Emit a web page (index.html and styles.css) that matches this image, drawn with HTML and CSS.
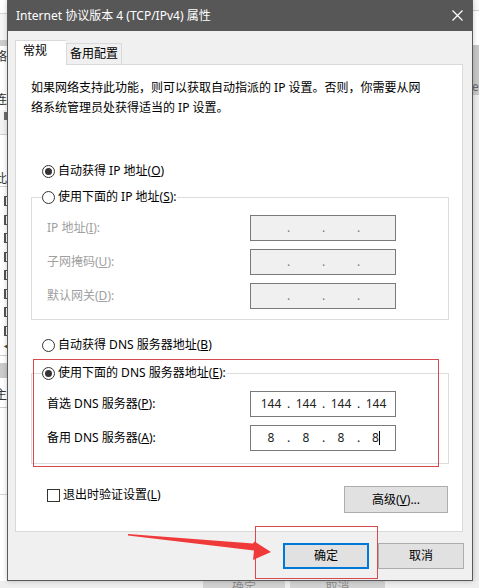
FILE: index.html
```html
<!DOCTYPE html>
<html lang="zh-CN">
<head>
<meta charset="utf-8">
<title>Internet 协议版本 4 (TCP/IPv4) 属性</title>
<link rel="stylesheet" href="styles.css">
</head>
<body>
<!-- window behind the dialog -->
<div class="backdrop">
  <div class="back-left">
    <div class="bl bl-top"></div>
    <div class="bl bl-soft"></div>
    <div class="bl bl-band"></div>
    <div class="bl bl-char c1">络</div>
    <div class="bl bl-char c2">连</div>
    <div class="bl bl-mark"><i></i></div>
    <div class="bl bl-char c3">此</div>
    <ul class="bl-list">
      <li><i></i></li><li><i></i></li><li><i></i></li><li><i></i></li>
      <li><i></i></li><li><i></i></li><li><i></i></li><li><i></i></li>
    </ul>
    <div class="bl bl-scroll">◄</div>
    <div class="bl bl-gray"></div>
    <div class="bl bl-char c4">主</div>
    <div class="bl bl-blank"></div>
  </div>
  <div class="back-right">
    <div class="br br-top"></div>
    <div class="br br-white"></div>
    <div class="br br-gray">er</div>
  </div>
  <div class="back-footer">
    <span class="back-btn b1">确定</span>
    <span class="back-btn b2">取消</span>
  </div>
</div>

<div class="dialog">
  <div class="titlebar">
    <span class="title">Internet 协议版本 4 (TCP/IPv4) 属性</span>
    <span class="close">
      <svg width="11" height="11" viewBox="0 0 11 11"><path d="M0.5 0.5 L10.5 10.5 M10.5 0.5 L0.5 10.5" stroke="#fff" stroke-width="1.2" fill="none"/></svg>
    </span>
  </div>
  <div class="dialog-body">
    <div class="tabs">
      <div class="tab active">常规</div>
      <div class="tab">备用配置</div>
    </div>
    <div class="panel">
      <p class="intro">如果网络支持此功能，则可以获取自动指派的 IP 设置。否则，你需要从网<br>络系统管理员处获得适当的 IP 设置。</p>

      <div class="choice auto-ip"><span class="radio on"></span>自动获得 IP 地址(<u>O</u>)</div>
      <fieldset class="group group-ip">
        <legend><span class="choice"><span class="radio"></span>使用下面的 IP 地址(<u>S</u>):</span></legend>
        <div class="field disabled">
          <span>IP 地址(<u>I</u>):</span>
          <div class="ip off"><span class="oct"></span><span class="dot">.</span><span class="oct"></span><span class="dot">.</span><span class="oct"></span><span class="dot">.</span><span class="oct"></span></div>
        </div>
        <div class="field disabled">
          <span>子网掩码(<u>U</u>):</span>
          <div class="ip off"><span class="oct"></span><span class="dot">.</span><span class="oct"></span><span class="dot">.</span><span class="oct"></span><span class="dot">.</span><span class="oct"></span></div>
        </div>
        <div class="field disabled">
          <span>默认网关(<u>D</u>):</span>
          <div class="ip off"><span class="oct"></span><span class="dot">.</span><span class="oct"></span><span class="dot">.</span><span class="oct"></span><span class="dot">.</span><span class="oct"></span></div>
        </div>
      </fieldset>

      <div class="choice auto-dns"><span class="radio"></span>自动获得 DNS 服务器地址(<u>B</u>)</div>
      <fieldset class="group group-dns">
        <legend><span class="choice"><span class="radio on"></span>使用下面的 DNS 服务器地址(<u>E</u>):</span></legend>
        <div class="field">
          <span>首选 DNS 服务器(<u>P</u>):</span>
          <div class="ip"><span class="oct">144</span><span class="dot">.</span><span class="oct">144</span><span class="dot">.</span><span class="oct">144</span><span class="dot">.</span><span class="oct">144</span></div>
        </div>
        <div class="field">
          <span>备用 DNS 服务器(<u>A</u>):</span>
          <div class="ip"><span class="oct">8</span><span class="dot">.</span><span class="oct">8</span><span class="dot">.</span><span class="oct">8</span><span class="dot">.</span><span class="oct">8<span class="caret"></span></span></div>
        </div>
      </fieldset>

      <div class="options">
        <label class="check"><span class="box"></span>退出时验证设置(<u>L</u>)</label>
        <button class="btn advanced" type="button">高级(<u>V</u>)...</button>
      </div>
    </div>
    <div class="actions">
      <button class="btn default" type="button">确定</button>
      <button class="btn" type="button">取消</button>
    </div>
  </div>
</div>

<!-- red annotations -->
<div class="mark mark-dns"></div>
<div class="mark mark-ok"></div>
<svg class="arrow" width="479" height="588" viewBox="0 0 479 588">
  <polygon points="128,534 253,543.4 254.5,541.5 271,552 253,560 254,550.5 128,535.6" fill="#f03a3a"/>
</svg>
</body>
</html>
```

FILE: styles.css
```css
* { box-sizing: border-box; }

body {
  margin: 0;
  width: 479px;
  height: 588px;
  position: relative;
  overflow: hidden;
  font: 12px/20px "Noto Sans", "Noto Sans CJK SC", sans-serif;
  color: #000;
  background: #f0f0f0;
}

/* ---------- background window ---------- */
.backdrop {
  position: absolute;
  inset: 0;
  display: grid;
  grid-template-columns: 40px 1fr 30px;
  grid-template-rows: 581px 7px;
  background: #f0f0f0;
}
.back-left {
  grid-column: 1;
  grid-row: 1;
  display: flex;
  flex-direction: column;
  background: #fff;
  overflow: hidden;
  color: #333;
}
.bl { flex: none; }
.bl-top { height: 14px; border-bottom: 1px solid #d4d4d4; }
.bl-soft { height: 26px; background: #f6f6f6; }
.bl-band { height: 6px; background: #cdcdcd; }
.bl-char { margin-left: -5px; line-height: 20px; }
.c1 { height: 40px; padding-top: 1px; }
.c2 { height: 24px; padding-top: 4px; }
.bl-mark { height: 25px; background: #f3f3f3; border-bottom: 1px solid #d0d0d0; padding: 2px 0 0 4px; }
.bl-mark i { display: block; width: 4px; height: 8px; background: #6a6a6a; }
.c3 { height: 52px; padding-top: 37px; line-height: 14px; border-bottom: 1px solid #d0d0d0; }
.bl-list { list-style: none; margin: 0; padding: 4.7px 0 0; flex: none; }
.bl-list li { height: 18.57px; display: flex; align-items: center; padding-left: 4px; }
.bl-list i { display: block; width: 9px; height: 10px; border: 1px solid #555; border-left-width: 2px; background: #fff; }
.bl-scroll { height: 16px; line-height: 12px; font-size: 9px; padding-left: 2px; color: #444; border-bottom: 1px solid #d0d0d0; }
.bl-gray { height: 15px; margin-top: 7px; background: #cbcbcb; }
.c4 { height: 30px; padding-top: 7px; border-bottom: 1px solid #d0d0d0; }
.bl-blank { height: 87px; border-bottom: 1px solid #d6d6d6; }

.back-right {
  grid-column: 3;
  grid-row: 1;
  display: flex;
  flex-direction: column;
  background: #ececec;
}
.br-top { height: 11px; background: #fafafa; border-bottom: 1px solid #cfcfcf; }
.br-white { height: 34px; background: #fff; }
.br-gray { height: 50px; background: #c6c6c6; padding: 32px 0 0 23px; line-height: 20px; color: #666; }

.back-footer {
  grid-column: 1 / -1;
  grid-row: 2;
  display: flex;
  gap: 5px;
  padding-left: 203px;
  overflow: hidden;
  background: #eeeeee;
}
.back-btn {
  display: block;
  height: 7px;
  padding-top: 1px;
  background: #d2d2d2;
  color: #8a8a8a;
  text-align: center;
  line-height: 12px;
  overflow: hidden;
}
.back-btn.b1 { width: 82px; }
.back-btn.b2 { width: 95px; }

/* ---------- dialog ---------- */
.dialog {
  position: absolute;
  left: 7px;
  top: 0;
  width: 466px;
  height: 581px;
  border: 1px solid #5a5a5a;
  border-top: 0;
  background: #f0f0f0;
  display: flex;
  flex-direction: column;
  box-shadow: 0 0 5px rgba(0, 0, 0, 0.22);
}
.titlebar {
  height: 31px;
  flex: none;
  background: #575757;
  color: #fff;
  display: flex;
  align-items: center;
  padding-left: 8px;
}
.title { flex: 1; white-space: nowrap; }
.close {
  width: 30px;
  height: 31px;
  display: flex;
  align-items: center;
  justify-content: center;
}

.dialog-body { padding: 9px 8px 0 7px; }

.tabs {
  display: flex;
  align-items: flex-end;
  height: 24px;
  position: relative;
  z-index: 1;
}
.tab {
  height: 21px;
  padding: 0 3px;
  width: 56px;
  border: 1px solid #d9d9d9;
  border-left: 0;
  border-bottom: 0;
  background: #f0f0f0;
  line-height: 20px;
  white-space: nowrap;
  text-align: center;
}
.tab.active {
  width: 51px;
  height: 25px;
  margin-bottom: -1px;
  padding: 0 0 0 7px;
  text-align: left;
  border-left: 1px solid #d9d9d9;
  border-right: 0;
  background: #fff;
}
.tab.active + .tab { border-left: 1px solid #d9d9d9; }

.panel {
  width: 448px;
  height: 468px;
  border: 1px solid #d9d9d9;
  background: #fff;
}

.intro {
  margin: 13px 0 0 15px;
  white-space: nowrap;
  line-height: 20px;
}

.choice {
  display: flex;
  align-items: center;
  height: 20px;
  white-space: nowrap;
}
.auto-ip { margin: 43px 0 0 26px; }
.auto-dns { margin: 15px 0 0 26px; }

.radio {
  flex: none;
  width: 13px;
  height: 13px;
  border: 1px solid #333;
  border-radius: 50%;
  margin-right: 3px;
  display: flex;
  align-items: center;
  justify-content: center;
  background: #fff;
}
.radio.on::after {
  content: "";
  width: 7px;
  height: 7px;
  border-radius: 50%;
  background: #333;
}

.group {
  margin: 6px 0 0 15px;
  width: 418px;
  min-width: 0;
  border: 1px solid #dcdcdc;
  padding: 8px 0 10px 0;
}
.group-dns { margin-top: 8px; padding-bottom: 12px; }
.group legend {
  margin-left: 10px;
  padding: 0;
}

.field {
  display: grid;
  grid-template-columns: 203px 146px;
  align-items: center;
  height: 26px;
  margin-left: 15px;
  white-space: nowrap;
}
.field + .field { margin-top: 8px; }
.field.disabled { color: #a0a0a0; }

.ip {
  height: 26px;
  border: 1px solid #7a7a7a;
  display: flex;
  align-items: center;
  padding-left: 5px;
  background: #fff;
  color: #222;
}
.ip.off { background: #f0f0f0; }
.ip.off .dot { color: #7a7a7a; }
.oct { width: 30px; text-align: center; }
.dot { width: 5px; text-align: center; }
.caret {
  display: inline-block;
  width: 1px;
  height: 14px;
  background: #000;
  vertical-align: -3px;
}

.options {
  display: flex;
  align-items: flex-start;
  justify-content: space-between;
  margin: 21px 14px 0 31px;
}
.check {
  display: flex;
  align-items: center;
  height: 20px;
  white-space: nowrap;
}
.box {
  width: 13px;
  height: 13px;
  border: 1px solid #333;
  margin-right: 3px;
  background: #fff;
}

.btn {
  font: inherit;
  color: #000;
  height: 26px;
  width: 86px;
  padding: 0;
  border: 1px solid #adadad;
  background: #e1e1e1;
  text-align: center;
  line-height: 20px;
}
.btn.advanced { width: 104px; height: 27px; margin-top: 1px; }
.btn.default { border: 2px solid #0078d7; }

.actions {
  display: flex;
  justify-content: flex-end;
  gap: 9px;
  margin-top: 11px;
}

/* ---------- annotations ---------- */
.mark {
  position: absolute;
  border: 1px solid #d9484c;
}
.mark-dns { left: 33px; top: 359px; width: 406px; height: 108px; }
.mark-ok { left: 255px; top: 526px; width: 123px; height: 53px; }

.arrow {
  position: absolute;
  left: 0;
  top: 0;
  pointer-events: none;
}
```
